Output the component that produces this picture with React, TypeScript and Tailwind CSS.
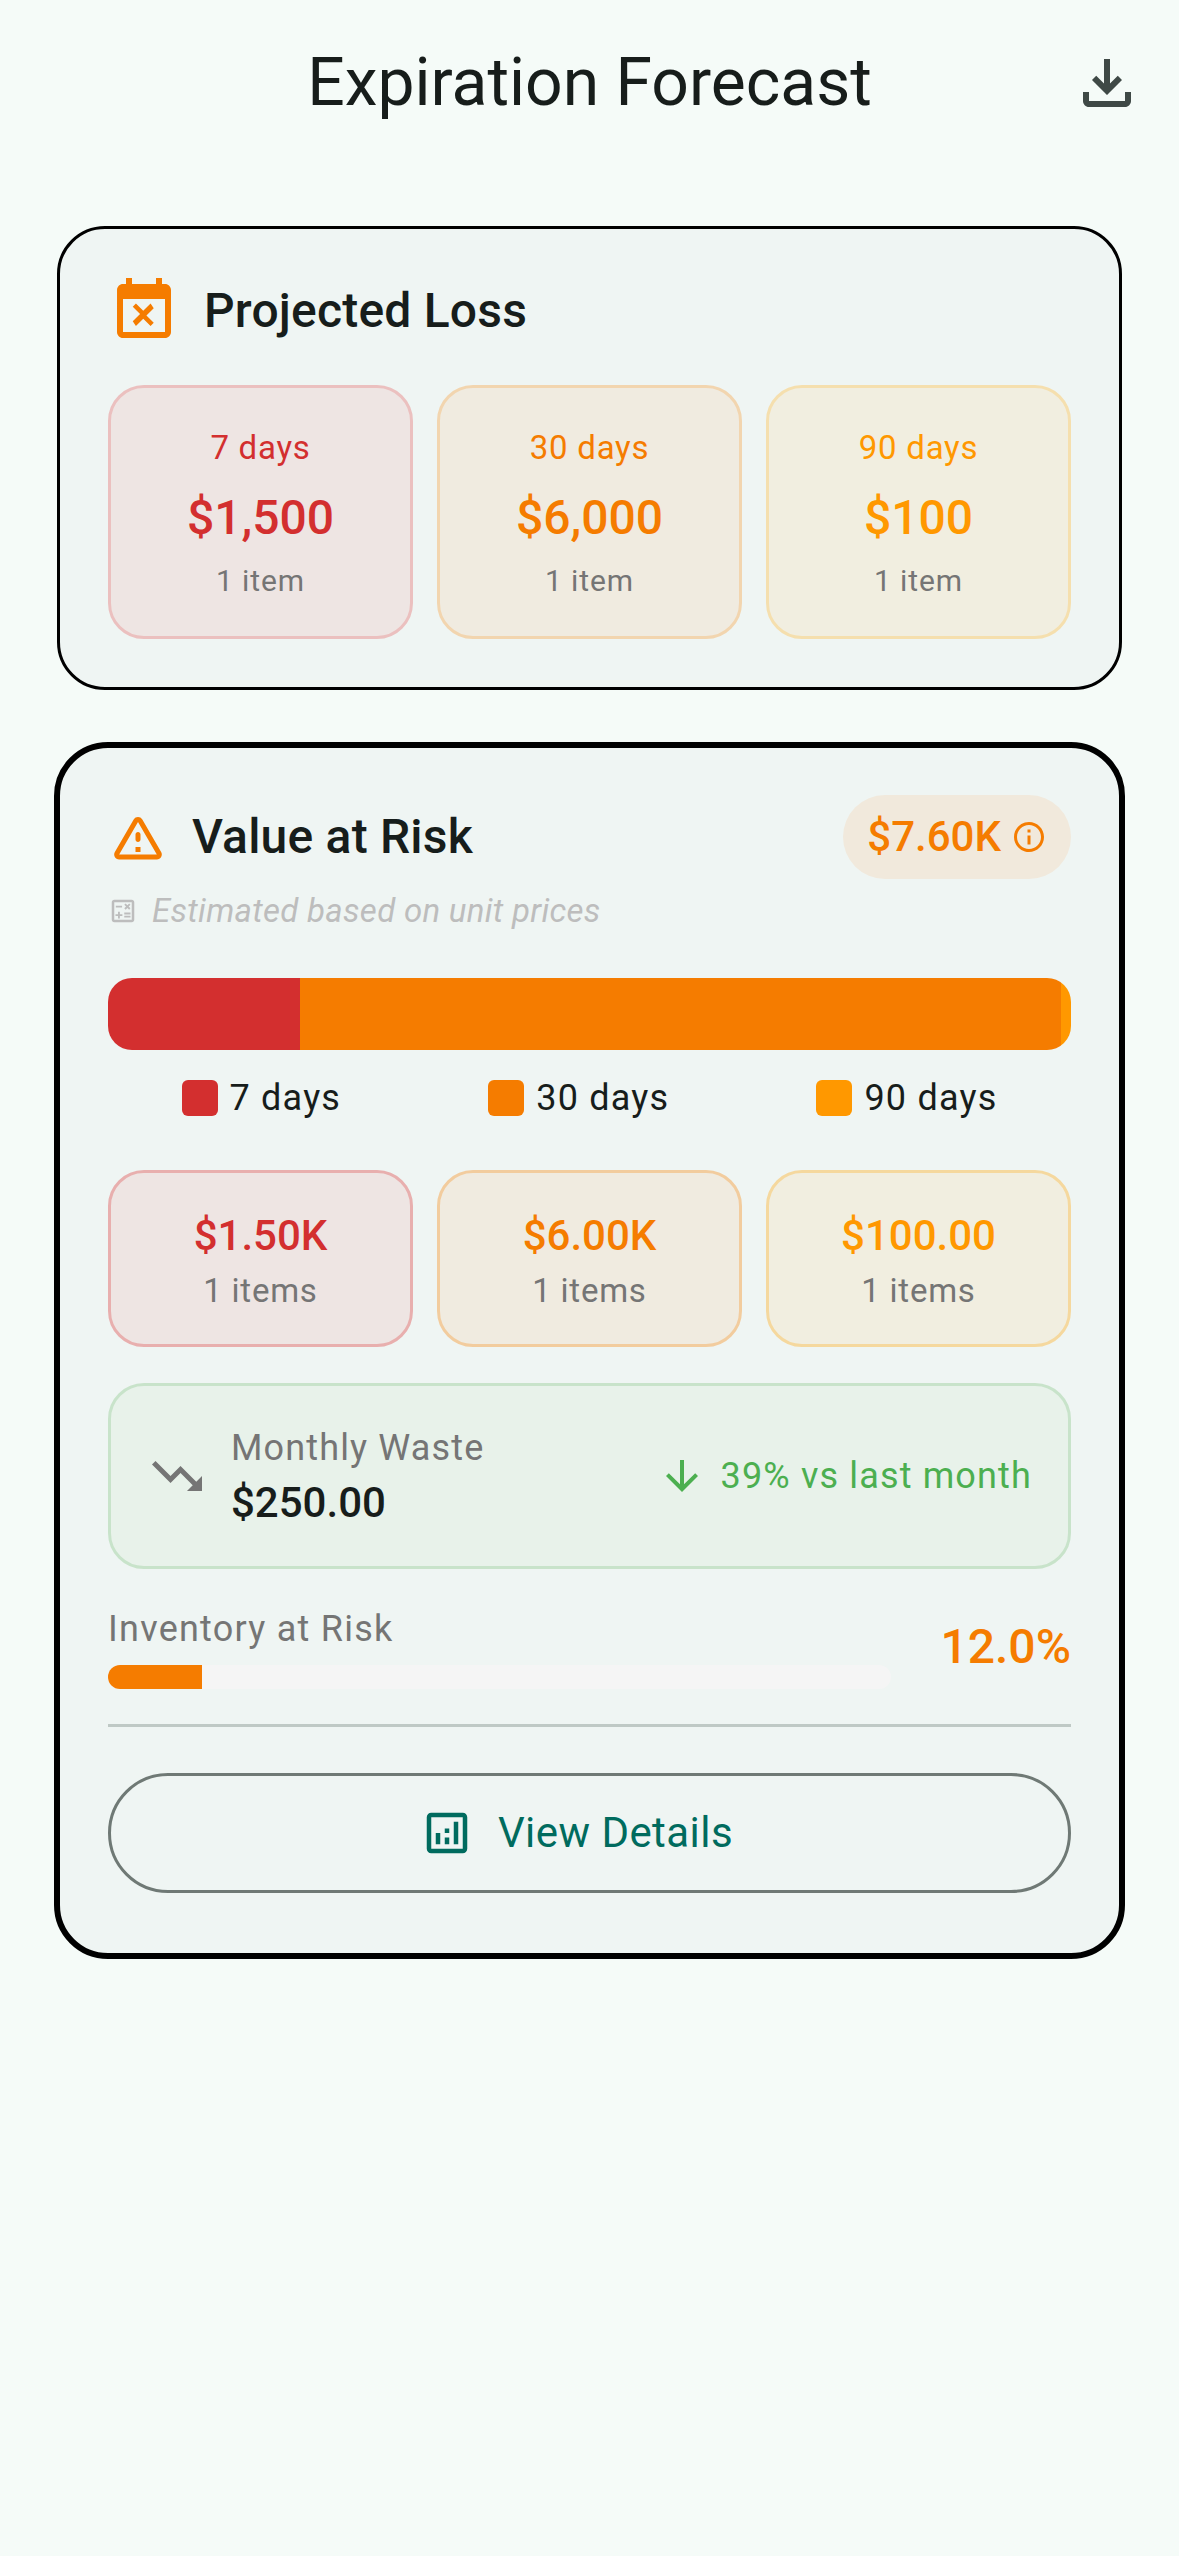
import React from "react";

const paths = {
  download:
    "M18 15v3H6v-3H4v3c0 1.1.9 2 2 2h12c1.1 0 2-.9 2-2v-3h-2zm-1-4l-1.41-1.41L13 12.17V4h-2v8.17L8.41 9.59 7 11l5 5 5-5z",
  eventBusy:
    "M9.31 17l2.44-2.44L14.19 17l1.06-1.06-2.44-2.44 2.44-2.44L14.19 9.5l-2.44 2.44L9.31 9.5l-1.06 1.06 2.44 2.44-2.44 2.44L9.31 17zM19 3h-1V1h-2v2H8V1H6v2H5c-1.11 0-1.99.9-1.99 2L3 19c0 1.1.89 2 2 2h14c1.1 0 2-.9 2-2V5c0-1.1-.9-2-2-2zm0 16H5V8h14v11z",
  warning:
    "M12 5.99L19.53 19H4.47L12 5.99M2.74 18c-.77 1.33.19 3 1.73 3h15.06c1.54 0 2.5-1.67 1.73-3L13.73 4.99c-.77-1.33-2.69-1.33-3.46 0L2.74 18zM11 11v2c0 .55.45 1 1 1s1-.45 1-1v-2c0-.55-.45-1-1-1s-1 .45-1 1zm0 5h2v2h-2z",
  info: "M11 7h2v2h-2zm0 4h2v6h-2zm1-9C6.48 2 2 6.48 2 12s4.48 10 10 10 10-4.48 10-10S17.52 2 12 2zm0 18c-4.41 0-8-3.59-8-8s3.59-8 8-8 8 3.59 8 8-3.59 8-8 8z",
  calculate:
    "M19 3H5c-1.1 0-2 .9-2 2v14c0 1.1.9 2 2 2h14c1.1 0 2-.9 2-2V5c0-1.1-.9-2-2-2zm0 16H5V5h14v14zM6.25 7.72h5v1.5h-5zM13 15.75h5v1.5h-5zM13 13.25h5v1.5h-5zM8 18h1.5v-2h2v-1.5h-2v-2H8v2H6V16h2zM14.09 10.95l1.41-1.41 1.41 1.41 1.06-1.06-1.41-1.42 1.41-1.41L16.91 6 15.5 7.41 14.09 6l-1.06 1.06 1.41 1.41-1.41 1.42z",
  trendingDown: "M16 18l2.29-2.29-4.88-4.88-4 4L2 7.41 3.41 6l6 6 4-4 6.3 6.29L22 12v6z",
  arrowDown: "M20 12l-1.41-1.41L13 16.17V4h-2v12.17l-5.58-5.59L4 12l8 8 8-8z",
  analytics:
    "M19 3H5c-1.1 0-2 .9-2 2v14c0 1.1.9 2 2 2h14c1.1 0 2-.9 2-2V5c0-1.1-.9-2-2-2zm0 16H5V5h14v14zM7 12h2v5H7zM15 7h2v10h-2zM11 14h2v3h-2zM11 10h2v2h-2z",
};

function Icon({ d, className }: { d: string; className: string }) {
  return (
    <svg viewBox="0 0 24 24" fill="currentColor" className={`shrink-0 ${className}`}>
      <path d={d} />
    </svg>
  );
}

const lossStats = [
  { label: "7 days", value: "$1,500", color: "text-[#D32F2F]", box: "bg-[#EEE5E3] border-[#EBC0BF]" },
  { label: "30 days", value: "$6,000", color: "text-[#F57C00]", box: "bg-[#F0EBE0] border-[#F2D5AF]" },
  { label: "90 days", value: "$100", color: "text-[#FF9800]", box: "bg-[#F1EEE0] border-[#F5DFAE]" },
];

const riskStats = [
  { value: "$1.50K", color: "text-[#D32F2F]", box: "bg-[#EEE5E3] border-[#E8AFAE]" },
  { value: "$6.00K", color: "text-[#F57C00]", box: "bg-[#F0EBE0] border-[#F2CC9E]" },
  { value: "$100.00", color: "text-[#FF9800]", box: "bg-[#F1EEE0] border-[#F5D89E]" },
];

const legend = [
  { label: "7 days", color: "bg-[#D32F2F]" },
  { label: "30 days", color: "bg-[#F57C00]" },
  { label: "90 days", color: "bg-[#FF9800]" },
];

export default function App() {
  return (
    <div className="min-h-[2556px] bg-[#F5FBF8] font-['Roboto',sans-serif] text-[#171D1B] pt-[47px]">
      <header className="grid grid-cols-[1fr_auto_1fr] items-center h-[72px]">
        <div />
        <h1 className="text-[66px] leading-[72px] font-normal">Expiration Forecast</h1>
        <div className="flex justify-end pr-[36px]">
          <Icon d={paths.download} className="w-[72px] h-[72px] text-[#3F4946]" />
        </div>
      </header>

      <section className="mt-[107px] mx-[57px] border-[3px] border-black rounded-[48px] bg-[#EFF5F3] px-[48px] pt-[46px] pb-[48px]">
        <div className="flex items-center gap-[24px] h-[72px]">
          <Icon d={paths.eventBusy} className="w-[72px] h-[72px] text-[#F57C00]" />
          <h2 className="text-[48px] font-medium leading-[64px] tracking-[0.2px]">Projected Loss</h2>
        </div>
        <div className="flex gap-[24px] mt-[38px]">
          {lossStats.map((s) => (
            <div
              key={s.label}
              className={`flex-1 h-[254px] border-[3px] rounded-[36px] flex flex-col items-center ${s.box}`}
            >
              <span className={`mt-[38px] text-[33px] leading-[44px] tracking-[0.75px] ${s.color}`}>{s.label}</span>
              <span className={`mt-[16px] text-[48px] leading-[64px] font-medium ${s.color}`}>{s.value}</span>
              <span className="mt-[11px] text-[30px] leading-[40px] tracking-[0.9px] text-[#757575]">1 item</span>
            </div>
          ))}
        </div>
      </section>

      <section className="mt-[52px] mx-[54px] border-[6px] border-black rounded-[54px] bg-[#EFF5F3] px-[48px] pt-[47px] pb-[60px]">
        <div className="flex items-center justify-between h-[84px]">
          <div className="flex items-center gap-[24px]">
            <Icon d={paths.warning} className="w-[60px] h-[60px] text-[#F57C00]" />
            <h2 className="text-[48px] font-medium leading-[64px] tracking-[0.2px]">Value at Risk</h2>
          </div>
          <div className="flex items-center gap-[10px] h-[84px] px-[24px] rounded-[42px] bg-[#F1E9DC] text-[#F57C00]">
            <span className="text-[42px] font-medium leading-[56px]">$7.60K</span>
            <Icon d={paths.info} className="w-[36px] h-[36px]" />
          </div>
        </div>

        <div className="flex items-center gap-[14px] h-[36px] mt-[14px] text-[#BDBDBD]">
          <Icon d={paths.calculate} className="w-[30px] h-[30px]" />
          <span className="text-[33px] italic leading-[36px] tracking-[0.3px]">Estimated based on unit prices</span>
        </div>

        <div className="flex h-[72px] mt-[49px] rounded-[24px] overflow-hidden">
          <div className="w-[192px] bg-[#D32F2F]" />
          <div className="flex-1 bg-[#F57C00]" />
          <div className="w-[10px] bg-[#FF9800]" />
        </div>

        <div className="flex justify-around mt-[30px]">
          {legend.map((l) => (
            <div key={l.label} className="flex items-center gap-[12px] h-[36px]">
              <div className={`w-[36px] h-[36px] rounded-[6px] ${l.color}`} />
              <span className="text-[36px] leading-[48px] tracking-[1.2px]">{l.label}</span>
            </div>
          ))}
        </div>

        <div className="flex gap-[24px] mt-[54px]">
          {riskStats.map((s) => (
            <div
              key={s.value}
              className={`flex-1 h-[177px] border-[3px] rounded-[36px] flex flex-col items-center ${s.box}`}
            >
              <span className={`mt-[35px] text-[42px] leading-[56px] font-medium ${s.color}`}>{s.value}</span>
              <span className="mt-[5px] text-[33px] leading-[44px] tracking-[0.75px] text-[#757575]">1 items</span>
            </div>
          ))}
        </div>

        <div className="flex items-center justify-between h-[186px] mt-[36px] px-[36px] border-[3px] border-[#C8E3CA] rounded-[36px] bg-[#E8F2EA]">
          <div className="flex items-center gap-[24px]">
            <Icon d={paths.trendingDown} className="w-[60px] h-[60px] text-[#757575]" />
            <div className="flex flex-col">
              <span className="mt-[3px] text-[36px] leading-[48px] tracking-[1.15px] text-[#757575]">Monthly Waste</span>
              <span className="mt-[3px] text-[42px] leading-[56px] font-medium">$250.00</span>
            </div>
          </div>
          <div className="flex items-center gap-[15px] text-[#4CAF50]">
            <Icon d={paths.arrowDown} className="w-[48px] h-[48px]" />
            <span className="text-[36px] leading-[48px] tracking-[1.15px]">39% vs last month</span>
          </div>
        </div>

        <div className="flex items-center justify-between mt-[36px]">
          <div className="w-[783px]">
            <div className="text-[36px] leading-[48px] tracking-[1.25px] text-[#757575]">Inventory at Risk</div>
            <div className="mt-[12px] h-[24px] rounded-[12px] bg-[#F5F5F5] overflow-hidden">
              <div className="w-[94px] h-full bg-[#F57C00]" />
            </div>
          </div>
          <span className="text-[48px] font-medium leading-[64px] text-[#F57C00]">12.0%</span>
        </div>

        <div className="h-[3px] mt-[35px] bg-[#BFC9C5]" />

        <button className="flex items-center justify-center gap-[24px] w-full h-[120px] mt-[46px] pr-[26px] border-[3px] border-[#6F7975] rounded-[60px] text-[#006B5E]">
          <Icon d={paths.analytics} className="w-[54px] h-[54px]" />
          <span className="text-[42px] font-normal leading-[56px] tracking-[0.45px]">View Details</span>
        </button>
      </section>
    </div>
  );
}
